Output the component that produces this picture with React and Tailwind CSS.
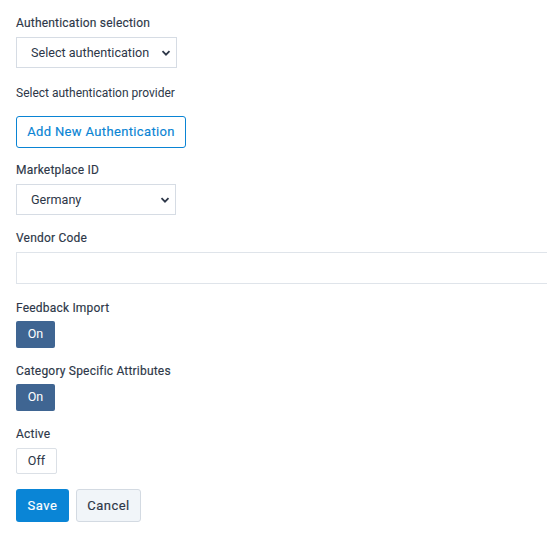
import React, { useState } from 'react';

const font = { fontFamily: 'Roboto, "Noto Sans", sans-serif' };

// Roboto here only ships 400/700, so medium weight is faked with a thin stroke
const medium = 'font-normal [-webkit-text-stroke:0.15px_currentColor]';

function Label({ children, mb = 'mb-[6px]' }) {
  return (
    <div className={`text-[12px] leading-4 text-[#2d3748] tracking-[0.2px] ${medium} ${mb}`}>
      {children}
    </div>
  );
}

function Chevron() {
  return (
    <svg className="absolute right-[6px] top-1/2 -translate-y-1/2 pointer-events-none" width="10" height="10" viewBox="0 0 10 10">
      <path d="M1.5 3.2 L5 6.7 L8.5 3.2" fill="none" stroke="#2d3748" strokeWidth="1.8" />
    </svg>
  );
}

function Select({ value, options, width }) {
  return (
    <div className={`relative ${width}`}>
      <select
        defaultValue={value}
        className="appearance-none w-full h-[31px] border border-[#d6dce4] bg-white pl-[14px] pr-6 pt-[2px] text-[12.6px] text-[#2d3748] outline-none"
        style={font}
      >
        {options.map((o) => (
          <option key={o}>{o}</option>
        ))}
      </select>
      <Chevron />
    </div>
  );
}

function Toggle({ on, onClick }) {
  return on ? (
    <button onClick={onClick} className="w-[39px] h-[27px] rounded-[2px] bg-[#3f6592] text-white text-[12.5px]">
      On
    </button>
  ) : (
    <button onClick={onClick} className="w-[41px] h-[26px] rounded-[2px] bg-white border border-[#dbe0e6] text-[#2d3748] text-[12.5px]">
      Off
    </button>
  );
}

export default function App() {
  const [feedback, setFeedback] = useState(true);
  const [category, setCategory] = useState(true);
  const [active, setActive] = useState(false);

  return (
    <div className="w-full min-h-[539px] overflow-hidden bg-white pl-4 pt-[15px]" style={font}>
      <Label>Authentication selection</Label>
      <Select value="Select authentication" options={['Select authentication']} width="w-[161px]" />

      <div className="text-[12px] leading-4 text-[#2d3748] mt-[17px]">Select authentication provider</div>
      <button
        className={`mt-[15px] h-[32px] w-[170px] border border-[#0a84d4] rounded-[3px] text-[#0a84d4] text-[13px] tracking-[0.35px] ${medium}`}
      >
        Add New Authentication
      </button>

      <div className="mt-[14px]">
        <Label>Marketplace ID</Label>
      </div>
      <Select value="Germany" options={['Germany', 'France', 'Italy', 'Spain', 'United Kingdom']} width="w-[160px]" />

      <div className="mt-[15px]">
        <Label>Vendor Code</Label>
      </div>
      <input className="w-[600px] h-[32px] border border-[#dfe4ea] outline-none px-3 text-[13px]" />

      <div className="mt-[16px]">
        <Label mb="mb-[5px]">Feedback Import</Label>
      </div>
      <Toggle on={feedback} onClick={() => setFeedback(!feedback)} />

      <div className="mt-[15px]">
        <Label mb="mb-[5px]">Category Specific Attributes</Label>
      </div>
      <Toggle on={category} onClick={() => setCategory(!category)} />

      <div className="mt-[15px]">
        <Label>Active</Label>
      </div>
      <Toggle on={active} onClick={() => setActive(!active)} />

      <div className="flex gap-[7px] mt-[15px]">
        <button className={`w-[53px] h-[33px] rounded-[3px] bg-[#0a85d6] text-white text-[13px] tracking-[0.5px] ${medium}`}>
          Save
        </button>
        <button
          className={`w-[65px] h-[33px] rounded-[3px] bg-[#f1f5f9] border border-[#d3dae2] text-[#2d3748] text-[13px] tracking-[0.5px] ${medium}`}
        >
          Cancel
        </button>
      </div>
    </div>
  );
}
